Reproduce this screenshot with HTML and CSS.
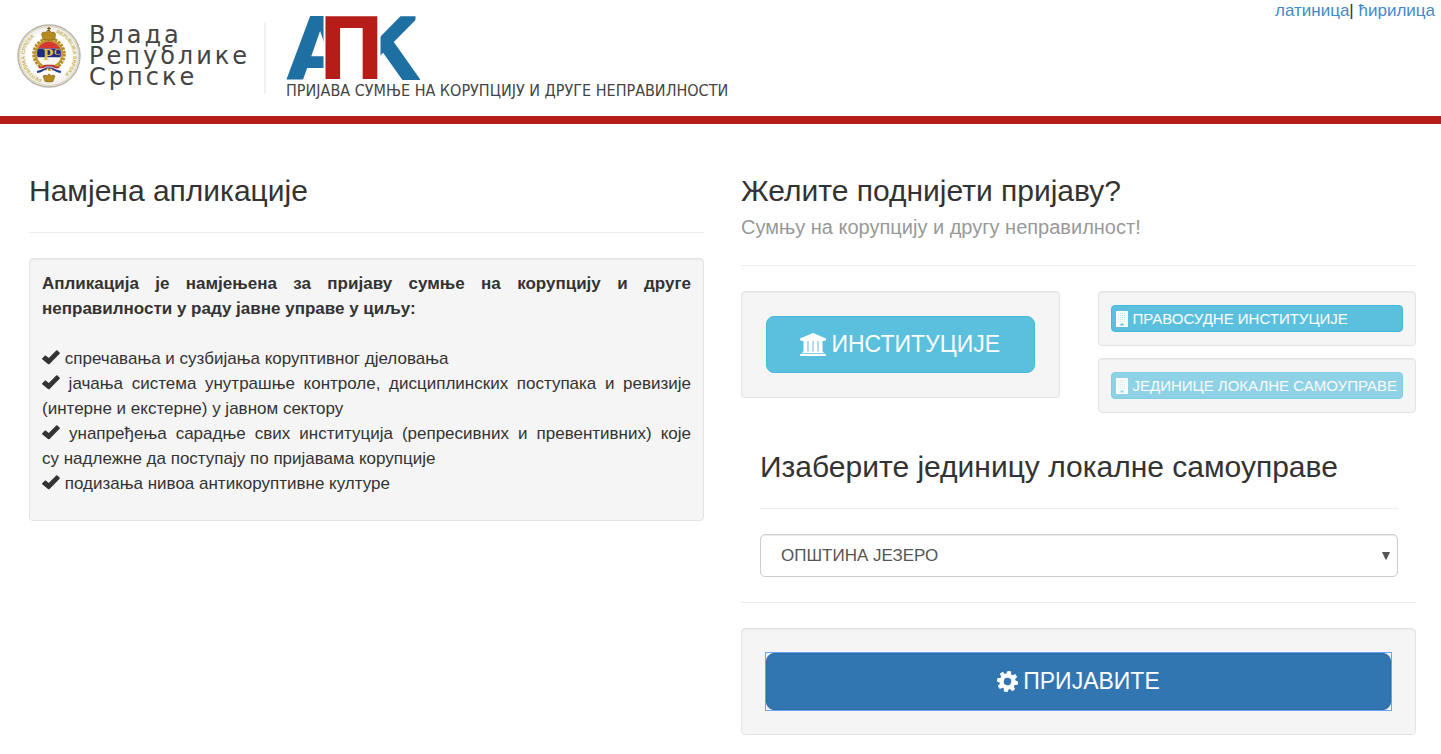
FILE: index.html
```html
<!DOCTYPE html>
<html lang="sr-Cyrl">
<head>
<meta charset="utf-8">
<meta name="viewport" content="width=device-width, initial-scale=1">
<title>АПК</title>
<link rel="stylesheet" href="styles.css">
</head>
<body>
<svg class="sprite" width="0" height="0" aria-hidden="true">
  <symbol id="check" viewBox="0 0 18 15"><path d="M0 8.600 3 5.600Q3.500 5.200 4 5.700L6.800 8.100 14.200 .5Q14.900 0 15.500.5L17.700 2.700Q18.200 3.200 17.600 3.800L7.600 13.900Q6.800 14.600 6 13.900L.2 9.300Q-.2 9 0 8.600Z"/></symbol>
  <symbol id="building" viewBox="0 0 12 16"><path fill-rule="evenodd" d="M.5 0h11q.5 0 .5.500v15q0 .5-.5.500h-11q-.5 0-.5-.5v-15q0-.5.5-.5ZM4.500 12.500v2h3v-2Z"/><path fill="#5bc0de" fill-opacity=".4" d="M2 2v1h1V2ZM4 2v1h1V2ZM6 2v1h1V2ZM8 2v1h1V2ZM2 4v1h1V4ZM4 4v1h1V4ZM6 4v1h1V4ZM8 4v1h1V4ZM2 6v1h1V6ZM4 6v1h1V6ZM6 6v1h1V6ZM8 6v1h1V6ZM2 8v1h1V8ZM4 8v1h1V8ZM6 8v1h1V8ZM8 8v1h1V8ZM2 10v1h1v-1ZM4 10v1h1v-1ZM6 10v1h1v-1ZM8 10v1h1v-1Z"/></symbol>
</svg>

<header class="header">
  <div class="gov">
    <svg class="emblem" viewBox="0 0 64 64" role="img" aria-label="Грб">
      <defs>
        <radialGradient id="disc"><stop offset=".7" stop-color="#fff"/><stop offset="1" stop-color="#e9e7e2"/></radialGradient>
        <clipPath id="shield"><circle cx="32" cy="29.500" r="12"/></clipPath>
        <path id="ringLeft" d="M25 55A24 24 0 0 1 25 9"/>
        <path id="ringRight" d="M39 9A24 24 0 0 1 39 55"/>
      </defs>
      <circle cx="32" cy="32" r="31" fill="url(#disc)" stroke="#b9b7b3" stroke-width="1.500"/>
      <circle cx="32" cy="32" r="29.500" fill="none" stroke="#dccb96" stroke-width=".7"/>
      <text class="ring-text"><textPath href="#ringLeft">РЕПУБЛИКА СРПСКА</textPath></text>
      <text class="ring-text"><textPath href="#ringRight">REPUBLIKA SRPSKA</textPath></text>
      <circle cx="32" cy="30" r="14.500" fill="none" stroke="#b88b1e" stroke-width="4.500" stroke-dasharray="2.500 1"/>
      <circle cx="32" cy="30" r="13.500" fill="none" stroke="#c29a30" stroke-width="2"/>
      <g clip-path="url(#shield)">
        <path fill="#d8392f" d="M18 16h28v8.500H18z"/>
        <path fill="#202d7e" d="M18 24.500h28v9H18z"/>
        <path fill="#f8f7f4" d="M18 33.500h28V45H18z"/>
      </g>
      <text class="monogram" x="26" y="36">Р</text>
      <text class="monogram-small" x="37" y="31">С</text>
      <path fill="#b58a21" stroke="#6d501b" stroke-width=".5" d="M26 15.500 24.500 10q1-3 4-1.500 1.500-2.500 3-2.500 1.500 0 3 2.500 3-1.500 4 1.500L38 15.500q-6 1.500-12 0Z"/>
      <path stroke="#6d501b" stroke-width="1.200" d="M32 3v4M30.200 4.500h3.600"/>
      <path fill="none" stroke="#c6322c" stroke-width="2.500" d="M22 43q4 2 6-1h8q2 3 6 1"/>
      <path fill="none" stroke="#2b3a86" stroke-width="2" d="M20 48q6-1 9-4.500h6q3 3.500 9 4.500"/>
      <path fill="none" stroke="#fff" stroke-width=".8" d="M22 45q5 0 7-2h6q2 2 7 2"/>
      <path fill="#b58a21" stroke="#6d501b" stroke-width=".5" d="M28 57.500 26 52q2-2 4 0 2-4 4 0 2-2 4 0l-2 5.500q-4 1-8 0Z"/>
    </svg>
    <span class="gov-name">Влада<br>Републике<br>Српске</span>
  </div>
  <div class="brand">
    <svg class="apk" viewBox="0 0 134 67" role="img" aria-label="АПК">
      <defs>
        <clipPath id="clipA"><path d="M0 0h37.500v67H0z"/></clipPath>
        <clipPath id="clipK"><path d="M94.500 0H129.500V16L134 40V67H94.500z"/></clipPath>
      </defs>
      <g clip-path="url(#clipA)"><text class="letter-a" x="0" y="66">А</text></g>
      <g clip-path="url(#clipK)"><text class="letter-k" x="64" y="66">К</text></g>
      <text class="letter-p" x="35" y="64">П</text>
    </svg>
    <span class="slogan">ПРИЈАВА СУМЊЕ НА КОРУПЦИЈУ И ДРУГЕ НЕПРАВИЛНОСТИ</span>
  </div>
  <nav class="lang"><a href="#lat">латиница</a>| <a href="#cir">ћирилица</a></nav>
</header>

<main class="page">
  <section class="column">
    <h3>Намјена апликације</h3>
    <hr>
    <div class="well purpose">
      <p class="lead">Апликација је намјењена за пријаву сумње на корупцију и друге неправилности у раду јавне управе у циљу:</p>
      <ul>
        <li><svg class="check"><use href="#check"/></svg> спречавања и сузбијања коруптивног дјеловања</li>
        <li><svg class="check"><use href="#check"/></svg> јачања система унутрашње контроле, дисциплинских поступака и ревизије (интерне и екстерне) у јавном сектору</li>
        <li><svg class="check"><use href="#check"/></svg> унапређења сарадње свих институција (репресивних и превентивних) које су&nbsp;надлежне да поступају по пријавама корупције</li>
        <li><svg class="check"><use href="#check"/></svg> подизања нивоа антикоруптивне културе</li>
      </ul>
    </div>
  </section>

  <section class="column">
    <h3>Желите поднијети пријаву?<small>Сумњу на корупцију и другу неправилност!</small></h3>
    <hr>
    <div class="choices">
      <div class="well well-lg">
        <button type="button" class="btn btn-lg btn-info">
          <svg class="icon-bank" viewBox="0 0 26 23"><path d="M13 0 26 5.500V7.500H24.500L24 8H2L1.500 7.500H0V5.500ZM3.500 8H7.500v10.500H8.500V8H12.500v10.500h1V8H17.500v10.500h1V8H22.500v10.500l1 .5v1H2.500v-1l1-.5ZM1 20.700h24l1 1V23H0v-1.300Z"/></svg>
          ИНСТИТУЦИЈЕ
        </button>
      </div>
      <div class="stack">
        <div class="well well-sm">
          <button type="button" class="btn btn-sm btn-info"><svg class="icon-building"><use href="#building"/></svg>ПРАВОСУДНЕ ИНСТИТУЦИЈЕ</button>
        </div>
        <div class="well well-sm">
          <button type="button" class="btn btn-sm btn-info" disabled><svg class="icon-building"><use href="#building"/></svg>ЈЕДИНИЦЕ ЛОКАЛНЕ САМОУПРАВЕ</button>
        </div>
      </div>
    </div>
    <div class="unit">
      <h3><label for="unit">Изаберите јединицу локалне самоуправе</label></h3>
      <hr>
      <div class="select">
        <select id="unit"><option>ОПШТИНА ЈЕЗЕРО</option></select>
        <svg class="caret" viewBox="0 0 8 8"><path d="M0 0h8L4.500 7.500h-1Z"/></svg>
      </div>
    </div>
    <hr>
    <div class="well well-lg">
      <div class="focus-ring">
        <button type="button" class="btn btn-lg btn-primary">
          <svg class="icon-gear" viewBox="-10.500 -10.500 21 21"><path fill-rule="evenodd" d="M-1.800-10.500h3.600l.6 2.900 1.500.6 2.400-1.700 2.500 2.500-1.700 2.400.6 1.500 2.800.5v3.600l-2.800.5-.6 1.500 1.700 2.400-2.500 2.500-2.400-1.700-1.500.6-.6 2.900h-3.600l-.6-2.900-1.500-.6-2.400 1.700-2.500-2.500 1.700-2.400-.6-1.500-2.800-.5v-3.600l2.800-.5.600-1.500-1.700-2.400 2.500-2.500 2.400 1.700 1.500-.6ZM0-3.700a3.700 3.700 0 1 0 0 7.400 3.700 3.700 0 1 0 0-7.400Z" transform="rotate(10)"/></svg>
          ПРИЈАВИТЕ
        </button>
      </div>
    </div>
  </section>
</main>
</body>
</html>
```
FILE: styles.css
```css
* { box-sizing: border-box; }

body {
  margin: 0;
  background: #fff;
  color: #333;
  font: 17px/25px "Liberation Sans", Arial, sans-serif;
}

.sprite { position: absolute; }

svg { fill: currentColor; }

a { color: #428bca; text-decoration: none; }

/* Header */
.header {
  display: flex;
  align-items: flex-start;
  min-height: 124px;
  border-bottom: 8px solid #b61d18;
}

.gov {
  display: flex;
  align-items: center;
  gap: 8px;
  margin-top: 23px;
  padding: 0 14px 6px 17px;
  border-right: 2px solid #f2f2f2;
}

.emblem { width: 64px; height: 64px; }

.ring-text { font: bold 5px "Liberation Sans", sans-serif; fill: #c9b34f; }
.monogram { font: bold 17px "Liberation Serif", serif; fill: #e0bd4e; }
.monogram-small { font: bold 9px "Liberation Serif", serif; fill: #e0bd4e; }

.gov-name {
  padding-top: 2px;
  color: #444;
  font: 24px/21px "DejaVu Sans", Verdana, sans-serif;
  letter-spacing: 3px;
}

.brand {
  display: flex;
  flex-direction: column;
  margin: 14px 0 0 20px;
}

.apk { width: 134px; height: 67px; overflow: visible; }

.letter-a { font: bold 88px "DejaVu Sans", sans-serif; fill: #1f70a2; }
.letter-k { font: bold 88px "DejaVu Sans", sans-serif; fill: #1f70a2; }
.letter-p { font: bold 86px Roboto, sans-serif; fill: #b61d18; stroke: #b61d18; stroke-width: 2px; }

.slogan {
  color: #444;
  font: 16px/20px "DejaVu Sans Condensed", Tahoma, sans-serif;
}

.lang {
  margin-left: auto;
  padding: 0 6px 0 0;
  line-height: 21px;
}

/* Columns */
.page {
  display: grid;
  grid-template-columns: 1fr 1fr;
  gap: 37px;
  padding: 50px 25px 19px 29px;
}

h3 {
  margin: 0;
  font-size: 30px;
  font-weight: 400;
  line-height: 33px;
}

h3 small {
  display: block;
  padding-top: 8px;
  color: #999;
  font-size: 20px;
  line-height: 25px;
}

hr {
  margin: 25px 0;
  border: 0;
  border-top: 1px solid #eee;
}

.well {
  border: 1px solid #e3e3e3;
  border-radius: 4px;
  background: #f5f5f5;
  box-shadow: inset 0 1px 1px rgba(0, 0, 0, .05);
}

.purpose { padding: 12px 12px 24px; text-align: justify; }
.purpose p { margin: 0 0 25px; }
.lead { font-weight: 700; }
.purpose ul { margin: 0; padding: 0; list-style: none; }
.check { width: 18px; height: 15px; vertical-align: -1px; }

.well-lg { padding: 24px; }
.well-sm { padding: 13px 12px; }

.choices {
  display: grid;
  grid-template-columns: 1fr 1fr;
  gap: 38px;
  align-items: start;
}

.stack { display: grid; gap: 12px; }

/* Buttons */
.btn {
  display: flex;
  align-items: center;
  width: 100%;
  border: 1px solid;
  color: #fff;
  font-family: inherit;
  white-space: nowrap;
}

.btn-lg {
  justify-content: center;
  gap: 5px;
  padding: 12px 20px;
  border-radius: 8px;
  font-size: 23px;
  line-height: 31px;
}

.btn-sm {
  gap: 5px;
  padding: 1px 4px;
  border-radius: 4px;
  font-size: 15px;
  line-height: 23px;
}

.btn-info { border-color: #46b8da; background: #5bc0de; }
.btn-info:disabled { opacity: .65; }
.btn-primary { border-color: #2e6da4; background: #3276b1; }
.focus-ring { outline: 1px solid #6ea2f5; }

.icon-bank { width: 26px; height: 23px; }
.icon-building { flex: none; width: 12px; height: 16px; }
.icon-gear { width: 21px; height: 21px; }

/* Unit picker */
.unit { padding: 37px 18px 0 19px; }

.select { display: grid; align-items: center; }

.select select {
  grid-area: 1 / 1;
  width: 100%;
  height: 43px;
  padding: 0 20px;
  border: 1px solid #ccc;
  border-radius: 5px;
  background: #fff;
  box-shadow: inset 0 1px 1px rgba(0, 0, 0, .075);
  color: #555;
  font: inherit;
  appearance: none;
}

.caret {
  grid-area: 1 / 1;
  justify-self: end;
  width: 8px;
  height: 8px;
  margin-right: 8px;
  color: #555;
  pointer-events: none;
}
```
